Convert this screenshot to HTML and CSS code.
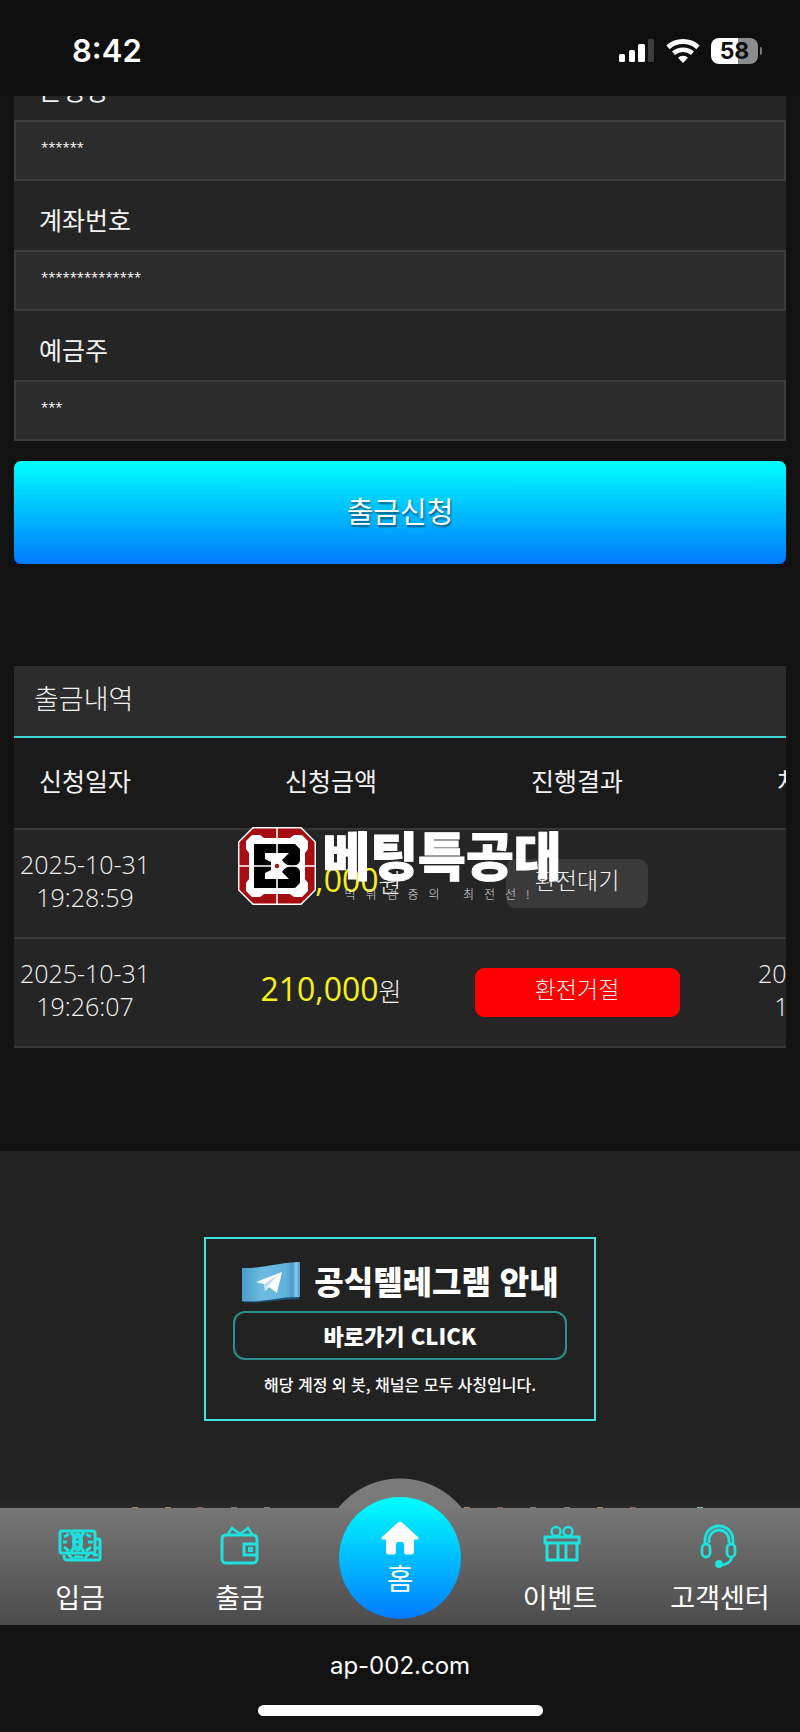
FILE: index.html
```html
<!DOCTYPE html>
<html lang="ko">
<head>
<meta charset="utf-8">
<meta name="viewport" content="width=device-width, initial-scale=1">
<title>출금신청</title>
<link rel="stylesheet" href="styles.css">
</head>
<body>
<header class="status-bar">
  <time class="clock">8:42</time>
  <div class="status-icons">
    <svg class="signal" width="36" height="24" viewBox="0 0 36 24" fill="#fff" aria-hidden="true">
      <rect x="0" y="15" width="6" height="8" rx="1.5"/><rect x="10" y="11" width="6" height="12" rx="1.5"/><rect x="19" y="5" width="7" height="18" rx="1.5"/><rect x="29" y="0" width="6" height="23" rx="1.5" fill="#3c3c3c"/>
    </svg>
    <svg class="wifi" width="34" height="26" viewBox="0 0 34 26" fill="none" stroke="#fff" aria-hidden="true">
      <path d="M2 9.300a22.500 22.500 0 0 1 30 0" stroke-width="5"/>
      <path d="M7.500 15.300a14.500 14.500 0 0 1 19 0" stroke-width="4.500"/>
      <path d="M17 25l-5-5.300a7.500 7.500 0 0 1 10 0z" fill="#fff" stroke="none"/>
    </svg>
    <div class="battery"><span class="battery-body">58</span><span class="battery-cap"></span></div>
  </div>
</header>

<main class="content">
  <form class="withdraw-form">
    <div class="fields">
      <label class="field-label" for="bank">은행명</label>
      <input class="field-input" id="bank" type="text" value="******">
      <label class="field-label" for="account">계좌번호</label>
      <input class="field-input" id="account" type="text" value="**************">
      <label class="field-label" for="holder">예금주</label>
      <input class="field-input" id="holder" type="text" value="***">
    </div>
    <button class="submit" type="submit">출금신청</button>
  </form>

  <section class="history">
    <h2 class="history-title">출금내역</h2>
    <table class="history-table">
      <colgroup><col class="col-date"><col class="col-item"><col class="col-item"><col class="col-item"></colgroup>
      <thead>
        <tr><th>신청일자</th><th>신청금액</th><th>진행결과</th><th>처리일자</th></tr>
      </thead>
      <tbody>
        <tr>
          <td>2025-10-31<br>19:28:59</td>
          <td><span class="amount">210,000</span>원</td>
          <td><span class="badge badge-wait">환전대기</span></td>
          <td></td>
        </tr>
        <tr>
          <td>2025-10-31<br>19:26:07</td>
          <td><span class="amount">210,000</span>원</td>
          <td><span class="badge badge-reject">환전거절</span></td>
          <td>2025-10-31<br>19:26:34</td>
        </tr>
      </tbody>
    </table>
    <div class="watermark">
      <svg class="emblem" width="78" height="78" viewBox="0 0 78 78" aria-hidden="true">
        <path d="M15 .7h48L77.300 15v48L63 77.300H15L.7 63V15z" fill="#a60d10" stroke="#fff" stroke-width="1.500"/>
        <path d="M14 8h8l4 3h26l4-3h8l6 6v8l-3 4v26l3 4v8l-6 6h-8l-4-3H26l-4 3h-8l-6-6v-8l3-4V26l-3-4v-8z" fill="#fff"/>
        <path d="M16 17h41l5 5v11q0 4-6 6 6 2 6 6v11l-5 5H16z" fill="#000"/>
        <path d="M27 26h24l-7 7q3 5 9 6-6 1-9 6l7 7H27v-6l6-3v-8l-6-3z" fill="#fff"/>
        <path d="M39 0v78M0 39h78" stroke="#fff" stroke-width="1.600"/>
        <circle cx="39" cy="39" r="4.500" fill="#fff"/><circle cx="39" cy="39" r="2.200" fill="#b01114"/>
      </svg>
      <div class="watermark-text">
        <strong class="watermark-name">베팅특공대</strong>
        <span class="watermark-tag">먹튀검증의 최전선!</span>
      </div>
    </div>
  </section>
</main>

<footer class="footer">
  <a class="telegram" href="#telegram">
    <span class="telegram-head">
      <svg width="60" height="42" viewBox="0 0 60 42" aria-hidden="true">
        <defs><linearGradient id="flag" x1="0" x2="1"><stop offset="0" stop-color="#4a9dc9"/><stop offset=".35" stop-color="#6cbce2"/><stop offset=".75" stop-color="#62b2dc"/><stop offset=".88" stop-color="#4a9ac6"/><stop offset=".93" stop-color="#8fd0ee"/><stop offset="1" stop-color="#4598c4"/></linearGradient></defs>
        <path d="M1 38c20 3 38-4 57-2v2c-18 0-38 5-57 3z" fill="#1d567f"/>
        <path d="M1 7c20 1 38-6 58-6v35c-20-1-38 6-58 4z" fill="url(#flag)"/>
        <path d="M15 21L41 11l-5 21-8-6-4 4-1-7z" fill="#fff"/><path d="M23 23l14-9-10 11-3 5z" fill="#c4dce9"/>
      </svg>
      <strong class="telegram-title">공식텔레그램 안내</strong>
    </span>
    <span class="telegram-go">바로가기 CLICK</span>
    <span class="telegram-note">해당 계정 외 봇, 채널은 모두 사칭입니다.</span>
  </a>
</footer>

<nav class="tabs">
  <svg class="peek" viewBox="0 0 800 1" height="1" preserveAspectRatio="none" aria-hidden="true">
    <path d="M132 0h6M165 0h6M464 0h6M597 0h6" stroke="#a3824f" stroke-width="2"/>
    <path d="M197 0h6M497 0h6M630 0h6" stroke="#8f5a48" stroke-width="2"/>
    <path d="M231 0h6M264 0h6M530 0h6M564 0h6" stroke="#777" stroke-width="2"/>
    <path d="M697 0h6" stroke="#7fb4b4" stroke-width="2"/>
  </svg>
  <a class="tab" href="#deposit">
    <svg width="44" height="44" viewBox="0 0 44 44" fill="none" stroke="#1de2dd" stroke-width="3" aria-hidden="true">
      <path d="M4 7h31q2 0 2 2v18q0 2-2 2H4q-2 0-2-2V9q0-2 2-2z"/><path d="M37 15h3q2 0 2 2v17q0 2-2 2H9q-3 0-3-5"/>
      <path d="M13 8q8 10 0 20M26 8q-8 10 0 20M6 13l5-3M6 23l5 4M33 13l-5-3M33 23l-5 4M5 18h4M30 18h5M10 30l5 5M31 30l-5 5M16 33h9M35 31h5M37 24h4"/>
      <ellipse cx="19.500" cy="18" rx="4" ry="8"/><path d="M18 18h3M18 13h3M18 23h3"/>
    </svg>
    <span>입금</span>
  </a>
  <a class="tab" href="#withdraw">
    <svg width="44" height="44" viewBox="0 0 44 44" fill="none" stroke="#1de2dd" stroke-width="3" aria-hidden="true">
      <rect x="4" y="11" width="35" height="28" rx="4"/><path d="M39 20H26v11h13"/><path d="M10 10l4-6 8 6 8-6 4 6" stroke-width="2.500"/><rect x="31" y="24" width="3" height="3" stroke-width="2"/>
    </svg>
    <span>출금</span>
  </a>
  <a class="tab tab-home" href="#home">
    <span class="home-disc">
      <svg width="38" height="34" viewBox="0 0 38 34" fill="#fff" aria-hidden="true"><path d="M17 1.500q2-1.500 4 0l16 14.500q1.500 2-1 2.500h-3V31q0 2.500-2.500 2.500H25q-2 0-2-2.500v-8q0-2-2-2h-4q-2 0-2 2v8q0 2.500-2 2.500H7.500Q5 33.500 5 31V18.500H2Q-.5 18 1 16z"/></svg>
      <span>홈</span>
    </span>
  </a>
  <a class="tab" href="#event">
    <svg width="44" height="44" viewBox="0 0 44 44" fill="none" stroke="#1de2dd" stroke-width="3" aria-hidden="true">
      <rect x="7" y="13" width="34" height="6"/><path d="M9 19v17h30V19M20 19v17M28 19v17"/><circle cx="18" cy="7.500" r="4.500" stroke-width="2.500"/><circle cx="30" cy="7.500" r="4.500" stroke-width="2.500"/>
    </svg>
    <span>이벤트</span>
  </a>
  <a class="tab" href="#support">
    <svg width="44" height="44" viewBox="0 0 44 44" fill="none" stroke="#1de2dd" stroke-width="2.800" aria-hidden="true">
      <path d="M7 20v-4a14 14 0 0 1 28 0v4M11 19v-3a10 10 0 0 1 20 0v3"/><rect x="4" y="20" width="8" height="13" rx="4"/><rect x="29" y="20" width="8" height="13" rx="4"/><path d="M34 33q-2 8-12 8"/><circle cx="21" cy="40" r="2.500" fill="#1de2dd"/>
    </svg>
    <span>고객센터</span>
  </a>
</nav>

<div class="browser-bar">
  <span class="address">ap-002.com</span>
  <span class="home-indicator"></span>
</div>
</body>
</html>
```
FILE: styles.css
```css
* { box-sizing: border-box; }

body {
  margin: 0;
  background: #121212;
  color: #f2f2f2;
  font-family: "Noto Sans CJK KR", sans-serif;
  overflow-x: hidden;
}

a { color: inherit; text-decoration: none; }

.status-bar {
  display: flex;
  align-items: center;
  justify-content: space-between;
  height: 96px;
  padding: 6px 38px 0 72px;
  background: #0f0f0f;
  color: #fff;
  font-family: Inter, sans-serif;
}
.clock { font-size: 31px; font-weight: 600; line-height: 40px; }
.status-icons { display: flex; align-items: center; gap: 11px; }
.battery { display: flex; align-items: center; gap: 2px; }
.battery-body {
  width: 47px;
  height: 26px;
  border-radius: 8px;
  background: linear-gradient(90deg, #fff 58%, #8c8c8c 58%);
  color: #0f0f0f;
  font-size: 23px;
  font-weight: 700;
  line-height: 26px;
  text-align: center;
}
.battery-cap { width: 2px; height: 8px; border-radius: 0 2px 2px 0; background: #777; }

.content { padding: 0 14px; }

.fields {
  display: flex;
  flex-direction: column;
  height: 345px;
  overflow: hidden;
  justify-content: flex-end;
  background: #252525;
}
.field-label {
  flex: none;
  height: 69px;
  padding: 20px 25px 0;
  font-size: 25px;
  line-height: 36px;
}
.field-input {
  flex: none;
  width: 100%;
  height: 61px;
  padding: 0 25px 8px;
  border: 2px solid #3d3c3a;
  background: #2c2c2c;
  color: #fff;
  font: 400 13px/24px "Open Sans", "Noto Sans CJK KR", sans-serif;
}
.submit {
  display: block;
  width: 100%;
  height: 103px;
  margin-top: 20px;
  padding: 0 0 6px;
  border: 0;
  border-radius: 7px;
  background: linear-gradient(#00ffff, #007bff);
  color: #fff;
  font: 400 29px/40px "Noto Sans CJK KR", sans-serif;
  text-shadow: 1px 2px 2px #0008;
}

.history { position: relative; margin-top: 102px; overflow: hidden; }
.history-title {
  height: 72px;
  margin: 0;
  padding: 12px 20px;
  border-bottom: 2px solid #40d4d0;
  background: #2c2c2c;
  font-size: 27px;
  font-weight: 300;
  line-height: 40px;
}
.history-table {
  width: 932px;
  table-layout: fixed;
  border-collapse: collapse;
  background: #252525;
  font-family: "Open Sans", "Noto Sans CJK KR", sans-serif;
  font-size: 25px;
  font-weight: 300;
  line-height: 33px;
  text-align: center;
}
.col-date { width: 194px; }
.col-item { width: 246px; }
.history-table tr { border-bottom: 2px solid #383838; }
.history-table th { height: 91px; padding: 0 0 4px; background: #1a1a1a; font-weight: 400; }
.history-table td { height: 109px; padding: 0 0 5px; }
.history-table th:first-child,
.history-table td:first-child { padding-right: 52px; }
.amount { color: #f6f01f; font-size: 32px; font-weight: 400; }
.badge {
  display: block;
  width: 142px;
  margin: 5px auto 0;
  padding: 5px 0 12px;
  border-radius: 9px;
  font-size: 23px;
  line-height: 32px;
}
.badge-wait { background: #3a3a3a; }
.badge-reject { width: 205px; background: #f00; }

.watermark {
  position: absolute;
  top: 161px;
  left: 0;
  right: 0;
  display: flex;
  justify-content: center;
  gap: 6px;
}
.watermark-text { display: flex; flex-direction: column; align-items: center; }
.watermark-name {
  color: #fff;
  font-size: 52px;
  font-weight: 900;
  line-height: 54px;
  -webkit-text-stroke: 1px #fff;
}
.watermark-tag { margin-top: 4px; color: #ddd; font-size: 12px; font-weight: 300; line-height: 18px; letter-spacing: 10px; }

.footer {
  display: flex;
  justify-content: center;
  margin-top: 103px;
  padding: 86px 0 87px;
  background: #222;
}
.telegram {
  display: flex;
  flex-direction: column;
  align-items: center;
  width: 392px;
  height: 184px;
  padding: 20px 28px;
  border: 2px solid #3fe4de;
  color: #fff;
}
.telegram-head { display: flex; align-items: center; gap: 13px; height: 46px; }
.telegram-title { padding-bottom: 4px; font-size: 32px; font-weight: 900; line-height: 42px; white-space: nowrap; }
.telegram-go {
  width: 334px;
  height: 49px;
  margin-top: 6px;
  border: 2px solid #2a8f8c;
  border-radius: 12px;
  font-size: 22px;
  font-weight: 900;
  line-height: 44px;
  text-align: center;
}
.telegram-note { margin-top: 11px; font-size: 16px; font-weight: 500; line-height: 26px; white-space: nowrap; }

.tabs {
  position: relative;
  display: grid;
  grid-template-columns: repeat(5, 1fr);
  height: 117px;
  background: linear-gradient(#777, #4b4b4b);
  box-shadow: 0 -2px 8px #ffffff10;
  color: #fff;
  font-size: 27px;
  line-height: 38px;
  text-align: center;
}
.peek { position: absolute; top: -1px; left: 0; width: 100%; }
.tab { display: flex; flex-direction: column; align-items: center; gap: 10px; padding-top: 16px; }
.tab svg { flex: none; }
.tab-home { padding: 0; }
/* raised bump behind the home disc, fading into the bar */
.tab-home::before {
  content: "";
  position: absolute;
  top: -30px;
  width: 160px;
  height: 30px;
  background: radial-gradient(circle 80px at 80px 80px, #7a7a7a 79px, transparent 80px);
}
.home-disc {
  position: absolute;
  top: -11px;
  display: flex;
  flex-direction: column;
  align-items: center;
  width: 122px;
  height: 122px;
  padding-top: 24px;
  border-radius: 50%;
  background: linear-gradient(#00ffff, #007bff);
  font-size: 29px;
  line-height: 44px;
}

.browser-bar {
  display: flex;
  flex-direction: column;
  align-items: center;
  gap: 23px;
  padding: 25px 0 16px;
  color: #fff;
  font-family: Inter, sans-serif;
}
.address { font-size: 24px; line-height: 32px; }
.home-indicator { width: 285px; height: 11px; border-radius: 6px; background: #fff; }
```
